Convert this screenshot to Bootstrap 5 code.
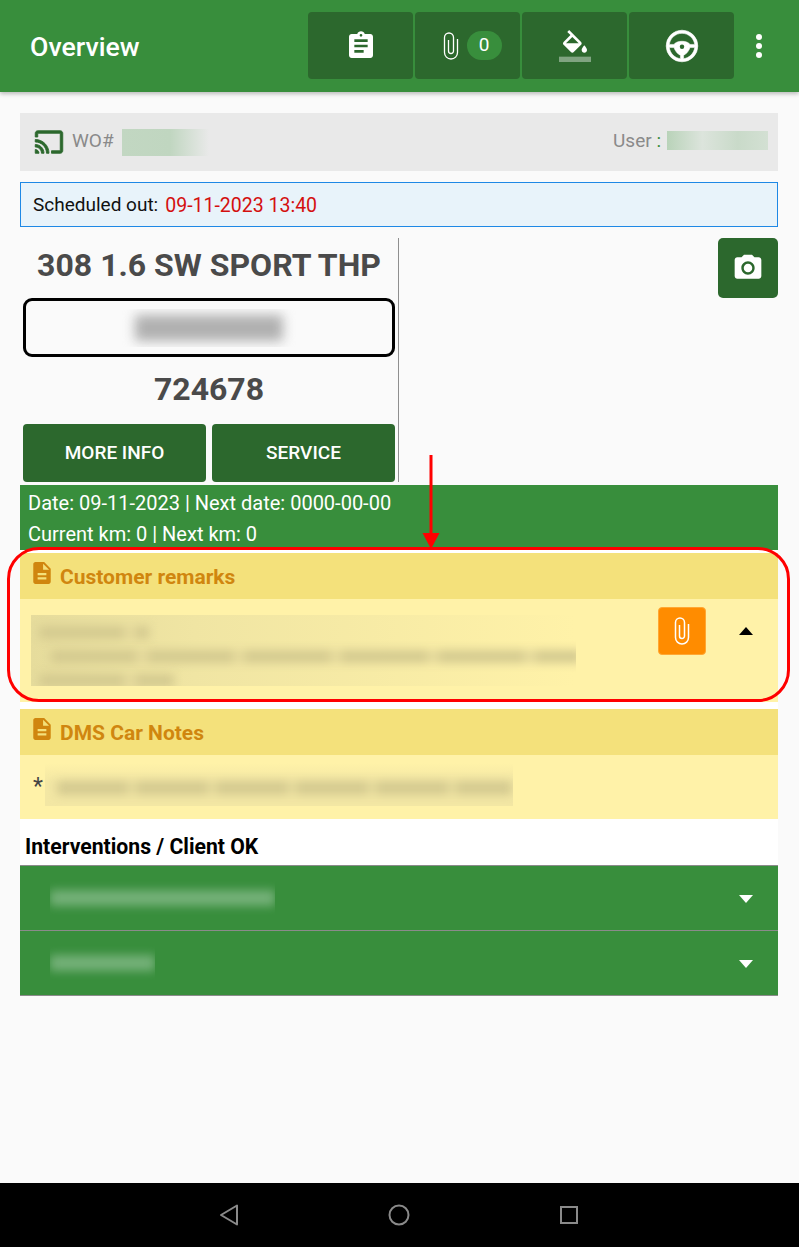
<!DOCTYPE html>
<html lang="en">
<head>
  <meta charset="UTF-8" />
  <meta name="viewport" content="width=device-width, initial-scale=1.0"/>
  <title>Overview</title>
  <link href="https://cdn.jsdelivr.net/npm/bootstrap@5.3.0/dist/css/bootstrap.min.css" rel="stylesheet"/>
  <style>
    html, body { height: 100%; }
    body {
      background-color: #fafafa;
      font-family: Roboto, "Liberation Sans", sans-serif;
      font-size: 20px;
      position: relative;
      overflow: hidden;
    }
    .page { height: 1247px; }
    .topbar {
      height: 92px;
      background: #388e3c;
      box-shadow: 0 2px 4px rgba(0,0,0,.25);
      padding: 12px 0 13px 30px;
    }
    .topbar-title { font-size: 26.700px; font-weight: 500; color: #fff; padding-top: 3px; }
    .tool-btn {
      width: 105px;
      height: 67px;
      background: #2c682d;
      border-radius: 4px;
      color: #fff;
      margin-right: 2px;
    }
    .clip-tool { padding-left: 9px; }
    .count-pill {
      width: 35px;
      height: 29px;
      border-radius: 15px;
      background: #388e3c;
      font-size: 19px;
      margin-left: 8px;
    }
    .more-dots { width: 63px; padding-right: 17px; }
    .more-dots i { display: block; width: 6px; height: 6px; border-radius: 50%; background: #fff; margin: 1.500px 0; }
    .content { padding: 21px 21px 0 20px; }
    .wo-bar { height: 58px; background: #e9e9e9; padding: 0 10px 0 14px; color: #8a8a8a; font-size: 19px; }
    .wo-label { margin: 0 8px 0 8px; position: relative; top: -1px; }
    .wo-smear { width: 87px; height: 27px; background: linear-gradient(90deg, #c2d7c2 0, #c0d6c0 55%, #e9e9e9 100%); }
    .user-smear { width: 101px; height: 19px; margin-left: 6px; position: relative; top: -2px; background: linear-gradient(90deg, #b9d3b9 0, #dce4dc 35%, #c9dac9 70%, #d3e0d3 100%); }
    .user-text { position: relative; top: -1px; }
    .user-sep { color: #388e3c; }
    .sched-bar { height: 45px; margin-top: 11px; border: 1px solid #1e88e5; background: #e8f3fa; padding: 2px 0 0 12px; color: #111; font-size: 19px; }
    .sched-date { color: #d40f0f; margin-left: 7px; font-size: 19.500px; }
    .vehicle { height: 244px; margin-top: 11px; }
    .vehicle-left { width: 379px; padding: 0 3px; border-right: 1px solid #8f8f8f; }
    .car-name { height: 60px; padding-bottom: 6px; font-size: 32px; font-weight: 700; color: #4a4a4a; white-space: nowrap; }
    .plate { height: 59px; border: 3px solid #000; border-radius: 9px; }
    .plate-smear { width: 176px; height: 38px; padding-top: 6px; }
    .plate-line { height: 26px; margin: 0 14px; background: #b0b0b0; filter: blur(6px); }
    .car-code { height: 67px; padding-bottom: 4px; font-size: 32px; font-weight: 700; color: #4a4a4a; }
    .veh-row { gap: 6px; }
    .veh-btn {
      flex: 1 1 0;
      height: 58px;
      background: #2c682d;
      color: #fff;
      border: 0;
      border-radius: 4px;
      font-size: 19px;
      font-weight: 500;
    }
    .veh-btn:hover { background: #2c682d; color: #fff; }
    .camera-btn { width: 60px; height: 60px; background: #2c682d; border-radius: 5px; }
    .sections { margin-top: 3px; background: #fff; }
    .dates { height: 65px; background: #388e3c; color: #fff; padding: 3px 8px; line-height: 31px; }
    .note-head { height: 46px; background: #f4e17b; padding: 4px 0 0 11px; color: #d0860f; font-size: 21px; font-weight: 700; }
    .note-head svg { margin-right: 7px; position: relative; top: -5px; }
    .note-body { background: #fff2a8; position: relative; }
    .remarks { margin-top: 3px; }
    .remarks .note-body { height: 103px; padding: 16px 0 0 11px; }
    .dms { margin-top: 7px; }
    .dms .note-body { height: 64px; padding: 8px 0 0 13px; color: #444; font-size: 23px; line-height: 1; }
    .star { padding-top: 12px; }
    .clip-btn { position: absolute; left: 638px; top: 8px; width: 48px; height: 48px; background: #ff8c00; border: 1px solid #ffa733; border-radius: 4px; }
    .caret-up, .caret-down { width: 0; height: 0; border-left: 7px solid transparent; border-right: 7px solid transparent; }
    .caret-up { position: absolute; left: 719px; top: 28px; border-bottom: 8px solid #000; }
    .caret-down { border-top: 8px solid #fff; position: relative; top: 1px; }
    .redact { overflow: hidden; flex: none; }
    .smear { filter: blur(5px); position: relative; }
    .remark-smear { width: 545px; height: 71px; background: linear-gradient(90deg, #e6dc9c 0, #f0e5a3 30%, #fff2a8 100%); }
    .remark-line { background: repeating-linear-gradient(90deg, #d4ca90 0 85px, #e4d99b 85px 97px); height: 13px; margin-left: 8px; margin-bottom: 11px; }
    .w-a { width: 110px; margin-top: 11px; }
    .w-b { width: 530px; margin-left: 20px; }
    .w-c { width: 135px; }
    .dms-smear { width: 468px; height: 43px; margin-left: 2px; background: linear-gradient(180deg, #fff2a8 0, #f3e7a4 45%); }
    .dms-line { width: 455px; height: 14px; margin: 18px 0 0 12px; background: repeating-linear-gradient(90deg, #d4ca90 0 70px, #e4d99b 70px 80px); }
    .interv-head { height: 46px; padding: 13px 0 0 5px; font-size: 21.200px; font-weight: 700; color: #000; line-height: 30px; background: #fff; }
    .job-row { height: 65px; background: #388e3c; border-top: 1px solid #8b8b8b; padding: 0 25px 0 30px; }
    .job-row:last-child { height: 66px; border-bottom: 1px solid #8b8b8b; }
    .job-smear { width: 225px; height: 34px; }
    .job-smear-s { width: 105px; height: 34px; }
    .job-line { height: 16px; margin-top: 9px; background: #74b078; }
    .sysbar { height: 64px; background: #000; gap: 146px; padding-right: 2px; }
    .annot-ring { position: absolute; left: 7px; top: 547px; width: 783px; height: 155px; border: 3px solid #f00; border-radius: 32px; pointer-events: none; }
    .annot-arrow { position: absolute; left: 420px; top: 455px; }
  </style>
</head>
<body>

<div class="page d-flex flex-column">
  <!-- toolbar -->
  <div class="topbar d-flex align-items-center">
    <div class="topbar-title flex-grow-1">Overview</div>
    <div class="tool-btn d-flex align-items-center justify-content-center">
      <svg width="32" height="32" viewBox="0 0 24 24" fill="#fff"><path d="M19 3h-4.18C14.4 1.84 13.3 1 12 1c-1.3 0-2.4.84-2.82 2H5c-1.1 0-2 .9-2 2v14c0 1.1.9 2 2 2h14c1.1 0 2-.9 2-2V5c0-1.1-.9-2-2-2zm-7 0c.55 0 1 .45 1 1s-.45 1-1 1-1-.45-1-1 .45-1 1-1zm2 14H7v-2h7v2zm3-4H7v-2h10v2zm0-4H7V7h10v2z"/></svg>
    </div>
    <div class="tool-btn clip-tool d-flex align-items-center justify-content-center">
      <svg width="16" height="28" viewBox="0 0 16 28" fill="none" stroke="#fff" stroke-width="1.300"><path d="M14.500 7V20.500a6.500 6.500 0 0 1-13 0V5.500a4.500 4.500 0 0 1 9 0V19a2.500 2.500 0 0 1-5 0V8"/></svg>
      <span class="count-pill d-flex align-items-center justify-content-center">0</span>
    </div>
    <div class="tool-btn d-flex align-items-center justify-content-center">
      <svg width="32" height="32" viewBox="0 0 24 24" fill="#fff"><path d="M16.56 8.94L7.62 0 6.21 1.41l2.38 2.38-5.15 5.15c-.59.59-.59 1.54 0 2.12l5.5 5.5c.29.29.68.44 1.06.44s.77-.15 1.06-.44l5.5-5.5c.59-.58.59-1.53 0-2.12zM5.21 10L10 5.21 14.79 10H5.21zM19 11.5s-2 2.17-2 3.5c0 1.1.9 2 2 2s2-.9 2-2c0-1.33-2-3.5-2-3.5z"/><rect y="20" width="24" height="4" fill-opacity=".4"/></svg>
    </div>
    <div class="tool-btn d-flex align-items-center justify-content-center">
      <svg width="38" height="38" viewBox="0 0 24 24" fill="#fff" stroke="#fff" stroke-width=".35"><path d="M12,2A10,10 0 0,0 2,12A10,10 0 0,0 12,22A10,10 0 0,0 22,12A10,10 0 0,0 12,2M12,4C16.1,4 19.5,7.1 20,11H17C16.5,9.9 14.4,9 12,9C9.6,9 7.5,9.9 7,11H4C4.5,7.1 7.9,4 12,4M4,13H7C7.2,14.3 9.1,17.3 11,17.8V20C7.4,19.6 4.4,16.6 4,13M13,17.8C14.9,17.3 16.8,14.3 17,13H20C19.6,16.6 16.6,19.6 13,20V17.8Z"/><circle cx="12" cy="12.500" r="1.400" fill="#2c682d" stroke="none"/></svg>
    </div>
    <div class="more-dots d-flex flex-column align-items-center"><i></i><i></i><i></i></div>
  </div>

  <div class="content flex-grow-1">
    <div class="wo-bar d-flex align-items-center">
      <svg width="30" height="30" viewBox="0 0 24 24" fill="#2c682d" stroke="#2c682d" stroke-width=".7"><path d="M1 18v3h3c0-1.66-1.34-3-3-3zm0-4v2c2.76 0 5 2.24 5 5h2c0-3.87-3.13-7-7-7zm0-4v2c4.97 0 9 4.03 9 9h2c0-6.08-4.93-11-11-11zm20-7H3c-1.1 0-2 .9-2 2v3h2V5h18v14h-7v2h7c1.1 0 2-.9 2-2V5c0-1.1-.9-2-2-2z"/></svg>
      <span class="wo-label">WO#</span>
      <div class="redact wo-smear"></div>
      <span class="user-text ms-auto">User <span class="user-sep">:</span></span>
      <div class="redact user-smear"></div>
    </div>

    <div class="sched-bar d-flex align-items-center">Scheduled out: <span class="sched-date">09-11-2023 13:40</span></div>

    <div class="vehicle d-flex">
      <div class="vehicle-left">
        <div class="car-name d-flex align-items-center justify-content-center">308 1.6 SW SPORT THP</div>
        <div class="plate d-flex align-items-center justify-content-center">
          <div class="redact plate-smear"><div class="plate-line"></div></div>
        </div>
        <div class="car-code d-flex align-items-center justify-content-center">724678</div>
        <div class="d-flex veh-row">
          <button type="button" class="btn veh-btn">MORE INFO</button>
          <button type="button" class="btn veh-btn">SERVICE</button>
        </div>
      </div>
      <div class="flex-grow-1 d-flex justify-content-end align-items-start">
        <div class="camera-btn d-flex align-items-center justify-content-center">
          <svg width="32" height="32" viewBox="0 0 24 24" fill="#fff"><circle cx="12" cy="12" r="3.200"/><path d="M9 2L7.17 4H4c-1.1 0-2 .9-2 2v12c0 1.1.9 2 2 2h16c1.1 0 2-.9 2-2V6c0-1.1-.9-2-2-2h-3.17L15 2H9zm3 15c-2.76 0-5-2.24-5-5s2.24-5 5-5 5 2.24 5 5-2.24 5-5 5z"/></svg>
        </div>
      </div>
    </div>

    <div class="sections">
      <div class="dates">Date: 09-11-2023 | Next date: 0000-00-00<br>Current km: 0 | Next km: 0</div>

      <div class="remarks">
        <div class="note-head d-flex align-items-center">
          <svg width="22" height="24" viewBox="3 1 18 22" fill="#d0860f"><path d="M14 2H6c-1.1 0-1.99.9-1.99 2L4 20c0 1.1.89 2 1.99 2H18c1.1 0 2-.9 2-2V8l-6-6zm2 16H8v-2h8v2zm0-4H8v-2h8v2zm-3-5V3.5L18.5 9H13z"/></svg>
          Customer remarks
        </div>
        <div class="note-body">
          <div class="redact remark-smear">
            <div class="smear remark-line w-a"></div>
            <div class="smear remark-line w-b"></div>
            <div class="smear remark-line w-c"></div>
          </div>
          <div class="clip-btn d-flex align-items-center justify-content-center">
            <svg width="16" height="28" viewBox="0 0 16 28" fill="none" stroke="#fff" stroke-width="1.500"><path d="M14.500 7V20.500a6.500 6.500 0 0 1-13 0V5.500a4.500 4.500 0 0 1 9 0V19a2.500 2.500 0 0 1-5 0V8"/></svg>
          </div>
          <div class="caret-up"></div>
        </div>
      </div>

      <div class="dms">
        <div class="note-head d-flex align-items-center">
          <svg width="22" height="24" viewBox="3 1 18 22" fill="#d0860f"><path d="M14 2H6c-1.1 0-1.99.9-1.99 2L4 20c0 1.1.89 2 1.99 2H18c1.1 0 2-.9 2-2V8l-6-6zm2 16H8v-2h8v2zm0-4H8v-2h8v2zm-3-5V3.5L18.5 9H13z"/></svg>
          DMS Car Notes
        </div>
        <div class="note-body d-flex">
          <span class="star">*</span>
          <div class="redact dms-smear"><div class="smear dms-line"></div></div>
        </div>
      </div>

      <div class="interv-head">Interventions / Client OK</div>
      <div>
        <div class="job-row d-flex align-items-center justify-content-between">
          <div class="redact job-smear"><div class="smear job-line"></div></div>
          <div class="caret-down"></div>
        </div>
        <div class="job-row d-flex align-items-center justify-content-between">
          <div class="redact job-smear-s"><div class="smear job-line"></div></div>
          <div class="caret-down"></div>
        </div>
      </div>
    </div>
  </div>

  <!-- android nav -->
  <div class="sysbar d-flex align-items-center justify-content-center">
    <svg width="24" height="24" viewBox="0 0 24 24" fill="none" stroke="#8a8a8a" stroke-width="2" stroke-linejoin="round"><path d="M20 2.500V21.500L4 12Z"/></svg>
    <svg width="24" height="24" viewBox="0 0 24 24" fill="none" stroke="#8a8a8a" stroke-width="2"><circle cx="12" cy="12" r="9.500"/></svg>
    <svg width="24" height="24" viewBox="0 0 24 24" fill="none" stroke="#8a8a8a" stroke-width="2"><rect x="4" y="4" width="16" height="16"/></svg>
  </div>
</div>

<!-- red annotation drawn over the screenshot -->
<div class="annot-ring"></div>
<svg class="annot-arrow" width="22" height="95" viewBox="0 0 22 95"><path d="M11 0V80" stroke="#f00" stroke-width="3"/><path d="M2.500 78H19.500L11 94Z" fill="#f00"/></svg>

</body>
</html>
